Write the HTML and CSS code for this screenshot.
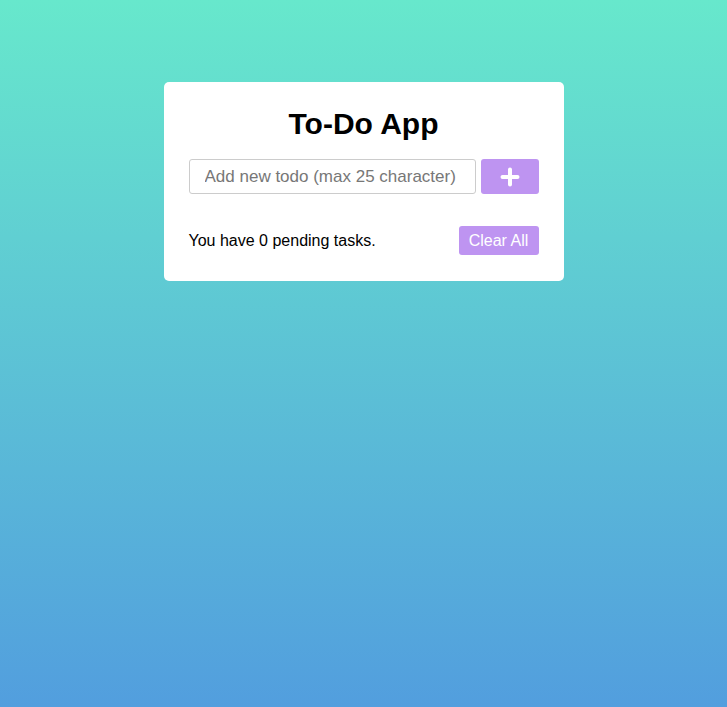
FILE: index.html
```html
<!DOCTYPE html>
<html lang="en">
<head>
<meta charset="utf-8">
<title>To-Do App</title>
<link rel="stylesheet" href="styles.css">
</head>
<body>
<div class="wrapper">
  <header class="title">To-Do App</header>
  <div class="input-field">
    <input type="text" placeholder="Add new todo (max 25 character)">
    <button class="add-btn" aria-label="Add">
      <svg width="20" height="20" viewBox="0 0 20 20"><path d="M10 2.5v15M2.5 10h15" stroke="#fff" stroke-width="4" stroke-linecap="round"/></svg>
    </button>
  </div>
  <ul class="todo-list"></ul>
  <div class="footer">
    <span>You have 0 pending tasks.</span>
    <button class="clear-btn">Clear All</button>
  </div>
</div>
</body>
</html>
```
FILE: styles.css
```css
* { box-sizing: border-box; }
html, body { margin: 0; padding: 0; }
body {
  min-height: 100vh;
  background: linear-gradient(to bottom, #67e8cc 0%, #529ede 100%);
  font-family: "Liberation Sans", Arial, sans-serif;
  padding-top: 82px;
}
.wrapper {
  width: 400px;
  margin: 0 auto;
  background: #fff;
  border-radius: 5px;
  padding: 25px 25px 26px;
}
.title {
  display: block;
  text-align: center;
  font-size: 30px;
  font-weight: 700;
  line-height: 34px;
  color: #000;
}
.input-field {
  display: flex;
  height: 35px;
  margin-top: 18px;
}
.input-field input {
  width: 287px;
  height: 100%;
  border: 1px solid #ccc;
  border-radius: 3px;
  font-size: 17px;
  padding-left: 15px;
  font-family: "Liberation Sans", Arial, sans-serif;
  outline: none;
}
.input-field input::placeholder { color: #777; }
.add-btn {
  width: 58px;
  height: 100%;
  margin-left: 5px;
  border: none;
  border-radius: 3px;
  background: #be94f1;
  display: flex;
  align-items: center;
  justify-content: center;
  padding: 0;
}
.todo-list { list-style: none; margin: 0; padding: 0; height: 32px; }
.footer {
  display: flex;
  align-items: center;
  justify-content: space-between;
  font-size: 16px;
  color: #000;
}
.clear-btn {
  width: 80px;
  height: 29px;
  border: none;
  border-radius: 3px;
  background: #be94f1;
  color: #fff;
  font-size: 16px;
  font-family: "Liberation Sans", Arial, sans-serif;
  padding: 0;
}
```
